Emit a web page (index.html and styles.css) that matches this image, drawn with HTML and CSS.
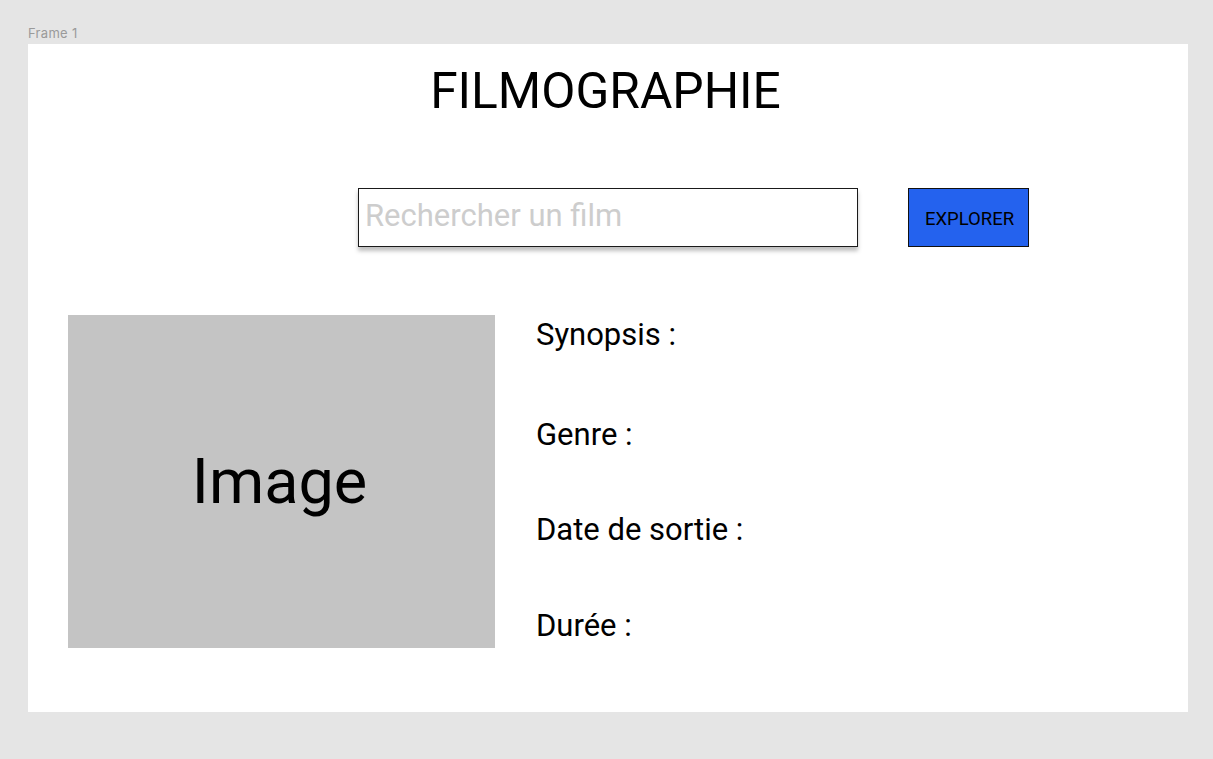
FILE: index.html
```html
<!DOCTYPE html>
<html lang="fr">
<head>
<meta charset="utf-8">
<title>Filmographie</title>
<link rel="stylesheet" href="styles.css">
</head>
<body>
<div class="canvas">
  <div class="frame-label">Frame 1</div>
  <main class="frame">
    <h1 class="title">FILMOGRAPHIE</h1>
    <div class="search-row">
      <div class="spacer"></div>
      <input class="search" type="text" placeholder="Rechercher un film">
      <div class="btn-cell"><button class="explore">EXPLORER</button></div>
    </div>
    <section class="content">
      <div class="poster">Image</div>
      <div class="details">
        <p class="field f1">Synopsis :</p>
        <p class="field f2">Genre :</p>
        <p class="field f3">Date de sortie :</p>
        <p class="field f4">Durée :</p>
      </div>
    </section>
  </main>
</div>
</body>
</html>
```

FILE: styles.css
```css
* { box-sizing: border-box; }
html, body {
  margin: 0;
  padding: 0;
  background: #e5e5e5;
  font-family: Roboto, "Liberation Sans", sans-serif;
}
.canvas {
  padding: 25px 25px 47px 28px;
}
.frame-label {
  font-family: Inter, Roboto, sans-serif;
  font-size: 13px;
  line-height: 16px;
  letter-spacing: 0.3px;
  color: #9a9a9a;
  height: 19px;
}
.frame {
  background: #ffffff;
  width: 1160px;
  height: 668px;
  padding-top: 19px;
}
.title {
  margin: 0;
  padding-right: 5px;
  text-align: center;
  font-weight: 400;
  font-size: 49.7px;
  line-height: 57px;
  color: #000;
}
.search-row {
  display: grid;
  grid-template-columns: 1fr 500px 1fr;
  margin-top: 68px;
  height: 59px;
}
.search {
  width: 500px;
  height: 59px;
  border: 1px solid #1a1a1a;
  box-shadow: 0 4px 4px rgba(0,0,0,0.25);
  padding: 0 6px 5px 6px;
  font-family: Roboto, sans-serif;
  font-size: 31px;
  color: #000;
  outline: none;
  background: #fff;
}
.search::placeholder {
  color: #cdcdcd;
}
.btn-cell {
  padding-left: 50px;
}
.explore {
  width: 121px;
  height: 59px;
  background: #2462ee;
  border: 1px solid #111;
  font-family: Roboto, sans-serif;
  font-size: 18.5px;
  color: #000;
  padding: 2px 0 0 2px;
}
.content {
  display: flex;
  margin-top: 68px;
  padding-left: 40px;
}
.poster {
  width: 427px;
  height: 333px;
  background: #c4c4c4;
  display: flex;
  align-items: center;
  justify-content: center;
  font-size: 63px;
  color: #000;
  padding-right: 4px;
}
.details {
  margin-left: 41px;
  padding-top: 2px;
}
.field {
  margin: 0;
  font-size: 31px;
  line-height: 36px;
  color: #000;
}
.f2 { margin-top: 64px; }
.f3 { margin-top: 59px; }
.f4 { margin-top: 60px; }
```
